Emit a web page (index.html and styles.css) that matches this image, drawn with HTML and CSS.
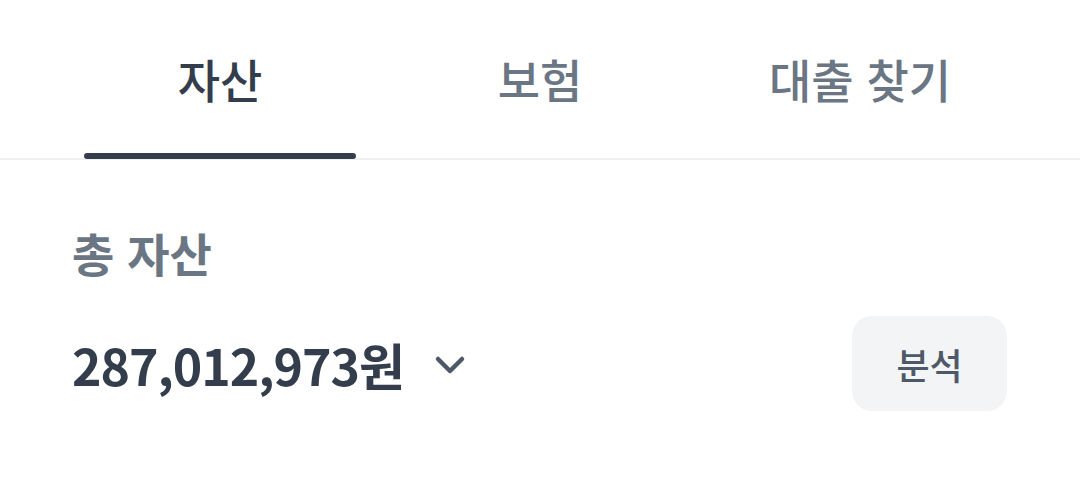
FILE: index.html
```html
<!DOCTYPE html>
<html lang="ko">
<head>
  <meta charset="UTF-8">
  <title>자산</title>
  <meta name="viewport" content="width=device-width, initial-scale=1">
  <link rel="stylesheet" href="styles.css">
</head>
<body>
  <nav class="tabs">
    <a class="tab active" href="#">자산</a>
    <a class="tab" href="#">보험</a>
    <a class="tab" href="#">대출 찾기</a>
  </nav>
  <section class="summary">
    <div class="summary-label">총 자산</div>
    <div class="summary-row">
      <div class="amount">
        <span class="amount-value">287,012,973원</span>
        <svg class="chevron" width="32" height="22" viewBox="0 0 32 22">
          <path d="M4 5 L16 17 L28 5" fill="none" stroke="#4e5968" stroke-width="4.5" stroke-linecap="round" stroke-linejoin="round"/>
        </svg>
      </div>
      <button class="analyze-btn">분석</button>
    </div>
  </section>
</body>
</html>
```
FILE: styles.css
```css
body {
  margin: 0;
  padding: 0;
  background: #fff;
  font-family: "Noto Sans CJK KR", "Noto Sans", sans-serif;
}
.tabs {
  display: flex;
  padding: 0 60px;
  border-bottom: 2px solid #eef0f2;
}
.tab {
  flex: 1;
  position: relative;
  text-align: center;
  text-decoration: none;
  font-size: 46px;
  font-weight: 500;
  color: #6b7684;
  padding: 45px 0 47px;
  line-height: 66px;
}
.tab.active {
  color: #333d4b;
}
.tab.active::after {
  content: "";
  position: absolute;
  left: 24px;
  right: 24px;
  bottom: -1px;
  height: 6px;
  border-radius: 3px;
  background: #333d4b;
}
.summary {
  padding: 62px 73px 0 72px;
}
.summary-label {
  font-size: 46px;
  font-weight: 700;
  color: #6b7684;
  line-height: 60px;
}
.summary-row {
  display: flex;
  align-items: center;
  justify-content: space-between;
  margin-top: 34px;
}
.amount {
  display: flex;
  align-items: center;
  gap: 30px;
}
.amount-value {
  font-size: 50px;
  font-weight: 700;
  color: #333d4b;
  letter-spacing: -1px;
}
.chevron {
  display: block;
  margin-top: 2px;
}
.analyze-btn {
  width: 155px;
  height: 95px;
  border: none;
  border-radius: 20px;
  background: #f2f4f6;
  color: #4e5968;
  font-family: "Noto Sans CJK KR", sans-serif;
  font-size: 36px;
  font-weight: 500;
  cursor: pointer;
}
```
